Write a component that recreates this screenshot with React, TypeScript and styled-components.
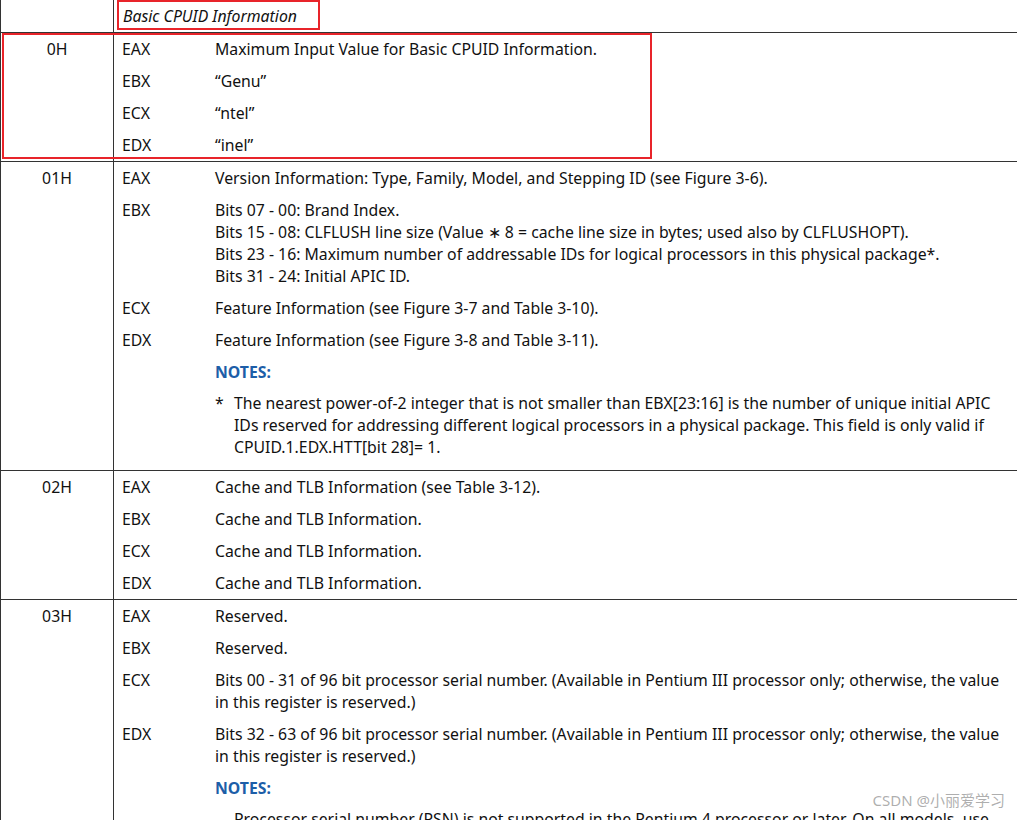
import React from "react";
import styled, { createGlobalStyle } from "styled-components";

const Global = createGlobalStyle`
  body { margin: 0; background: #fff; font-family: "Noto Sans", "Open Sans", sans-serif; color: #111; overflow: hidden; }
`;

const Page = styled.div`
  width: 1017px; height: 820px; overflow: hidden; position: relative;
  border-left: 1px solid #333; box-sizing: border-box;
`;
const Group = styled.div<{ $last?: boolean }>`
  display: grid; grid-template-columns: 113px 1fr;
  border-bottom: ${(p) => (p.$last ? "none" : "1px solid #333")};
`;
const Leaf = styled.div`
  font-size: 15.8px; text-align: center; padding: 5px 0; line-height: 22px;
  border-right: 1px solid #333;
`;
const Body = styled.div`
  display: flex; flex-direction: column; padding-bottom: ${(p: { $pb?: number }) => p.$pb ?? 0}px;
`;
const Row = styled.div`
  display: grid; grid-template-columns: 93px 1fr;
  font-size: 15.8px; line-height: 22px; padding: 5px 0 5px 8px;
`;
const Header = styled.div`
  font-style: italic; font-size: 15.8px; line-height: 22px; padding: 5px 0 5px 9px;
`;
const Notes = styled.div`
  color: #1d5ea8; font-weight: 700; font-size: 15.8px; line-height: 22px; padding: 5px 0 5px 101px;
`;
const Note = styled.div`
  display: grid; grid-template-columns: 19px 1fr; font-size: 15.8px; line-height: 22px;
  padding: 4px 4px 6px 101px;
`;
const RedBox = styled.div<{ $x: number; $y: number; $w: number; $h: number }>`
  position: absolute; left: ${(p) => p.$x}px; top: ${(p) => p.$y}px;
  width: ${(p) => p.$w}px; height: ${(p) => p.$h}px;
  border: 2px solid #e8242a; box-sizing: border-box; pointer-events: none;
`;
const Mark = styled.div`
  position: absolute; right: 12px; bottom: 10px; font-size: 15px; color: rgba(120,120,120,0.6);
  font-family: "Noto Sans", "Noto Sans CJK SC", sans-serif; background: rgba(255,255,255,0.6);
`;

const R = ({ r, children }: { r: string; children: React.ReactNode }) => (
  <Row><span>{r}</span><span>{children}</span></Row>
);

export default function App() {
  return (
    <Page>
      <Global />
      <Group>
        <Leaf style={{ padding: 0 }} />
        <Header>Basic CPUID Information</Header>
      </Group>
      <Group>
        <Leaf>0H</Leaf>
        <Body>
          <R r="EAX">Maximum Input Value for Basic CPUID Information.</R>
          <R r="EBX">“Genu”</R>
          <R r="ECX">“ntel”</R>
          <R r="EDX">“inel”</R>
        </Body>
      </Group>
      <Group>
        <Leaf>01H</Leaf>
        <Body $pb={6}>
          <R r="EAX">Version Information: Type, Family, Model, and Stepping ID (see Figure 3-6).</R>
          <R r="EBX">
            Bits 07 - 00: Brand Index.<br />
            Bits 15 - 08: CLFLUSH line size (Value ∗ 8 = cache line size in bytes; used also by CLFLUSHOPT).<br />
            Bits 23 - 16: Maximum number of addressable IDs for logical processors in this physical package*.<br />
            Bits 31 - 24: Initial APIC ID.
          </R>
          <R r="ECX">Feature Information (see Figure 3-7 and Table 3-10).</R>
          <R r="EDX">Feature Information (see Figure 3-8 and Table 3-11).</R>
          <Notes>NOTES:</Notes>
          <Note>
            <span>*</span>
            <span>The nearest power-of-2 integer that is not smaller than EBX[23:16] is the number of unique initial APIC IDs reserved for addressing different logical processors in a physical package. This field is only valid if CPUID.1.EDX.HTT[bit 28]= 1.</span>
          </Note>
        </Body>
      </Group>
      <Group>
        <Leaf>02H</Leaf>
        <Body>
          <R r="EAX">Cache and TLB Information (see Table 3-12).</R>
          <R r="EBX">Cache and TLB Information.</R>
          <R r="ECX">Cache and TLB Information.</R>
          <R r="EDX">Cache and TLB Information.</R>
        </Body>
      </Group>
      <Group $last>
        <Leaf>03H</Leaf>
        <Body>
          <R r="EAX">Reserved.</R>
          <R r="EBX">Reserved.</R>
          <R r="ECX">Bits 00 - 31 of 96 bit processor serial number. (Available in Pentium III processor only; otherwise, the value in this register is reserved.)</R>
          <R r="EDX">Bits 32 - 63 of 96 bit processor serial number. (Available in Pentium III processor only; otherwise, the value in this register is reserved.)</R>
          <Notes>NOTES:</Notes>
          <Note>
            <span></span>
            <span>Processor serial number (PSN) is not supported in the Pentium 4 processor or later. On all models, use the PSN flag (returned using CPUID) to check for PSN support before accessing the feature.</span>
          </Note>
        </Body>
      </Group>
      <RedBox $x={116} $y={0} $w={203} $h={30} />
      <RedBox $x={1} $y={33} $w={650} $h={126} />
      <Mark>CSDN @小丽爱学习</Mark>
    </Page>
  );
}
